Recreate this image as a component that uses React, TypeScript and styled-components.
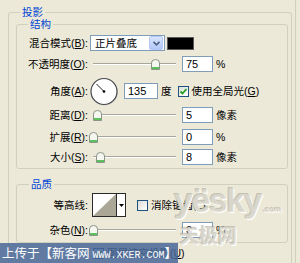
import React from 'react'
import styled, { createGlobalStyle } from 'styled-components'

const GlobalStyle = createGlobalStyle`
  html, body {
    margin: 0;
    padding: 0;
    background: #ECE9D8;
    overflow: hidden;
  }
  body {
    width: 300px;
    height: 263px;
    font-family: "Liberation Sans", "Noto Sans CJK SC", sans-serif;
    font-size: 10.5px;
    color: #000;
  }
`

const Thumb = () => (
  <svg width="9" height="11" viewBox="0 0 9 11">
    <path d="M0.5 10.5 V4 Q0.5 0.5 4.5 0.5 Q8.5 0.5 8.5 4 V10.5 Z" fill="#F7F7F2" stroke="#8A9488" />
    <rect x="1" y="8" width="7" height="2" fill="#5CC05C" />
  </svg>
)

const Check = () => (
  <svg width="9" height="9" viewBox="0 0 9 9">
    <path d="M1.5 4.5 L3.5 6.5 L7.5 2" stroke="#21A121" strokeWidth="1.8" fill="none" />
  </svg>
)

const Chevron = () => (
  <svg width="7" height="5" viewBox="0 0 7 5">
    <path d="M0.5 0.8 L3.5 3.8 L6.5 0.8" stroke="#4D6185" strokeWidth="1.6" fill="none" />
  </svg>
)

const Dial = () => (
  <svg width="29" height="29" viewBox="0 0 29 29">
    <circle cx="14.5" cy="15" r="13.5" fill="#B8B6AA" opacity="0.5" />
    <circle cx="14" cy="14.5" r="13" fill="#FFF" stroke="#45494F" strokeWidth="1.2" />
    <line x1="14" y1="14.5" x2="6.5" y2="7" stroke="#222" strokeWidth="1" />
    <circle cx="14" cy="14.5" r="1.3" fill="#000" />
  </svg>
)

const App: React.FC = () => {
  return (
    <Page>
      <GlobalStyle />
      <Outer>
        <Legend $ml={4}>投影</Legend>
        <Group>
          <Legend $ml={11}>结构</Legend>
          <Row $h={16}>
            <Label>混合模式(<U>B</U>):</Label>
            <Select>
              <SelectText>正片叠底</SelectText>
              <SelectButton><Chevron /></SelectButton>
            </Select>
            <Swatch />
          </Row>
          <Row $h={16} $mt={5}>
            <Label>不透明度(<U>O</U>):</Label>
            <Slider><Track /><Knob $pos={62}><Thumb /></Knob></Slider>
            <Input>75</Input>
            <Unit>%</Unit>
          </Row>
          <Row $h={30} $mt={4}>
            <Label>角度(<U>A</U>):</Label>
            <Dial />
            <Input $w={34} $ml={5}>135</Input>
            <Unit $ml={3}>度</Unit>
            <Box $ml={6} $checked><Check /></Box>
            <BoxLabel>使用全局光(<U>G</U>)</BoxLabel>
          </Row>
          <Row $h={16} $mt={1}>
            <Label>距离(<U>D</U>):</Label>
            <Slider><Track /><Knob $pos={4}><Thumb /></Knob></Slider>
            <Input>5</Input>
            <Unit>像素</Unit>
          </Row>
          <Row $h={16} $mt={6}>
            <Label>扩展(<U>R</U>):</Label>
            <Slider><Track /><Knob $pos={0}><Thumb /></Knob></Slider>
            <Input>0</Input>
            <Unit>%</Unit>
          </Row>
          <Row $h={16} $mt={4}>
            <Label>大小(<U>S</U>):</Label>
            <Slider><Track /><Knob $pos={7}><Thumb /></Knob></Slider>
            <Input>8</Input>
            <Unit>像素</Unit>
          </Row>
        </Group>
        <Group $mt={9} $pb={4} $pt={3}>
          <Legend $ml={12}>品质</Legend>
          <Row $h={24}>
            <Label>等高线:</Label>
            <Contour>
              <svg width="23" height="22" viewBox="0 0 23 22">
                <rect x="0" y="0" width="23" height="22" fill="#FFF" />
                <polygon points="0,22 23,0 23,22" fill="#ABA797" />
              </svg>
              <ContourArrow>
                <svg width="5" height="3" viewBox="0 0 5 3">
                  <polygon points="0,0 5,0 2.5,3" fill="#000" />
                </svg>
              </ContourArrow>
            </Contour>
            <Box $ml={11} />
            <BoxLabel>消除锯齿(<U>L</U>)</BoxLabel>
          </Row>
          <Row $h={16} $mt={5}>
            <Label>杂色(<U>N</U>):</Label>
            <Slider><Track /><Knob $pos={0}><Thumb /></Knob></Slider>
            <Input>0</Input>
            <Unit>%</Unit>
          </Row>
        </Group>
        <Row $h={16} $mt={2}>
          <Box $ml={77} $checked><Check /></Box>
          <BoxLabel>图层挖空投影(<U>U</U>)</BoxLabel>
        </Row>
      </Outer>

      <Watermark>
        <Brand>yësky<Dot>.com</Dot></Brand>
        <BrandCn>天极网</BrandCn>
      </Watermark>

      <Banner>
        上传于【新客网<Site>WWW.XKER.COM</Site>】
      </Banner>
    </Page>
  )
}
export default App;

const Page = styled.div`
  position: relative;
  width: 296px;
  height: 263px;
  overflow: hidden;
  box-sizing: border-box;
  padding-top: 6px;
  border-right: 1px solid #D0D0BF;
`;

const Outer = styled.fieldset`
  margin: 0 0 0 8px;
  width: 284px;
  height: 270px;
  box-sizing: border-box;
  padding: 0 3px 0 7px;
  border: 1px solid #D0D0BF;
  border-radius: 3px;
`;

const Group = styled.fieldset<{ $mt?: number; $pt?: number; $pb?: number }>`
  margin: ${p => p.$mt ?? 0}px 0 0 0;
  padding: ${p => p.$pt ?? 5}px 0 ${p => p.$pb ?? 3}px 0;
  border: 1px solid #D0D0BF;
  border-radius: 3px;
  min-width: 0;
`;

const Legend = styled.legend<{ $ml: number }>`
  margin-left: ${p => p.$ml}px;
  padding: 0 2px;
  line-height: 12px;
  height: 12px;
  color: #0046D5;
  font-size: 10.5px;
`;

const Row = styled.div<{ $h: number; $mt?: number }>`
  display: flex;
  align-items: center;
  height: ${p => p.$h}px;
  margin-top: ${p => p.$mt ?? 0}px;
  white-space: nowrap;
`;

const Label = styled.div`
  width: 71px;
  flex-shrink: 0;
  margin-right: 2px;
  text-align: right;
  line-height: 14px;
`;

const U = styled.span`
  text-decoration: underline;
`;

const Select = styled.div`
  display: flex;
  align-items: center;
  justify-content: space-between;
  width: 75px;
  height: 16px;
  box-sizing: border-box;
  border: 1px solid #7F9DB9;
  background: #FFF;
  padding: 0 1px 0 4px;
`;

const SelectText = styled.span`
  line-height: 14px;
`;

const SelectButton = styled.div`
  display: flex;
  align-items: center;
  justify-content: center;
  width: 12px;
  height: 12px;
  border: 1px solid #B4C8F6;
  border-radius: 2px;
  background: linear-gradient(#D9E5FD, #B3C8F8);
`;

const Swatch = styled.div`
  width: 27px;
  height: 13px;
  box-sizing: border-box;
  margin-left: 2px;
  background: #000;
  border: 1px solid #5A5A5A;
`;

const Slider = styled.div`
  position: relative;
  display: flex;
  align-items: center;
  width: 87px;
  height: 16px;
  padding: 0 1px 0 3px;
  box-sizing: border-box;
`;

const Track = styled.div`
  flex: 1;
  height: 1px;
  background: #A7A69A;
  border-bottom: 1px solid #FFF;
`;

const Knob = styled.div<{ $pos: number }>`
  position: absolute;
  top: 3px;
  left: ${p => p.$pos - 1.5}px;
  display: flex;
`;

const Input = styled.div<{ $w?: number; $ml?: number }>`
  width: ${p => p.$w ?? 31}px;
  height: 16px;
  box-sizing: border-box;
  margin-left: ${p => p.$ml ?? 5}px;
  padding-left: 3px;
  border: 1px solid #7F9DB9;
  background: #FFF;
  line-height: 14px;
  font-size: 11px;
`;

const Unit = styled.span<{ $ml?: number }>`
  margin-left: ${p => p.$ml ?? 3}px;
  line-height: 14px;
`;

const Box = styled.div<{ $ml?: number; $checked?: boolean }>`
  display: flex;
  align-items: center;
  justify-content: center;
  width: 11px;
  height: 11px;
  box-sizing: border-box;
  margin-left: ${p => p.$ml ?? 0}px;
  border: 1px solid #1C5180;
  background: linear-gradient(135deg, #DCDCD7, #FFF);
`;

const BoxLabel = styled.span`
  margin-left: 3px;
  line-height: 14px;
`;

const Contour = styled.div`
  display: flex;
  width: 34px;
  height: 24px;
  box-sizing: border-box;
  margin-left: 2px;
  border: 1px solid #2A2A2A;
  background: #FFF;
`;

const ContourArrow = styled.div`
  display: flex;
  align-items: center;
  justify-content: center;
  flex: 1;
  border-left: 1px solid #2A2A2A;
`;

const Watermark = styled.div`
  position: absolute;
  left: 174px;
  top: 182px;
  display: flex;
  flex-direction: column;
  pointer-events: none;
  color: rgba(220, 217, 205, 0.85);
  text-shadow: -1px -1px 0 rgba(160, 158, 148, 0.55), 1px 1px 0 #FFF;
`;

const Brand = styled.div`
  font-family: "Liberation Sans", sans-serif;
  font-weight: bold;
  font-size: 34px;
  letter-spacing: -1.5px;
  line-height: 36px;
`;

const Dot = styled.span`
  font-size: 8px;
  letter-spacing: 0;
  margin-left: 2px;
`;

const BrandCn = styled.div`
  margin: -4px 0 0 6px;
  font-family: "Noto Sans CJK SC", sans-serif;
  font-weight: bold;
  font-size: 19px;
  line-height: 22px;
`;

const Banner = styled.div`
  position: absolute;
  left: 0;
  top: 243px;
  width: 178px;
  height: 20px;
  box-sizing: border-box;
  padding-left: 2px;
  background: rgba(72, 104, 152, 0.86);
  color: #FFF;
  font-family: "Noto Sans CJK SC", sans-serif;
  font-size: 12.5px;
  line-height: 20px;
  white-space: nowrap;
`;

const Site = styled.span`
  margin-left: 3px;
  font-family: "Liberation Mono", monospace;
  font-size: 10px;
`;
